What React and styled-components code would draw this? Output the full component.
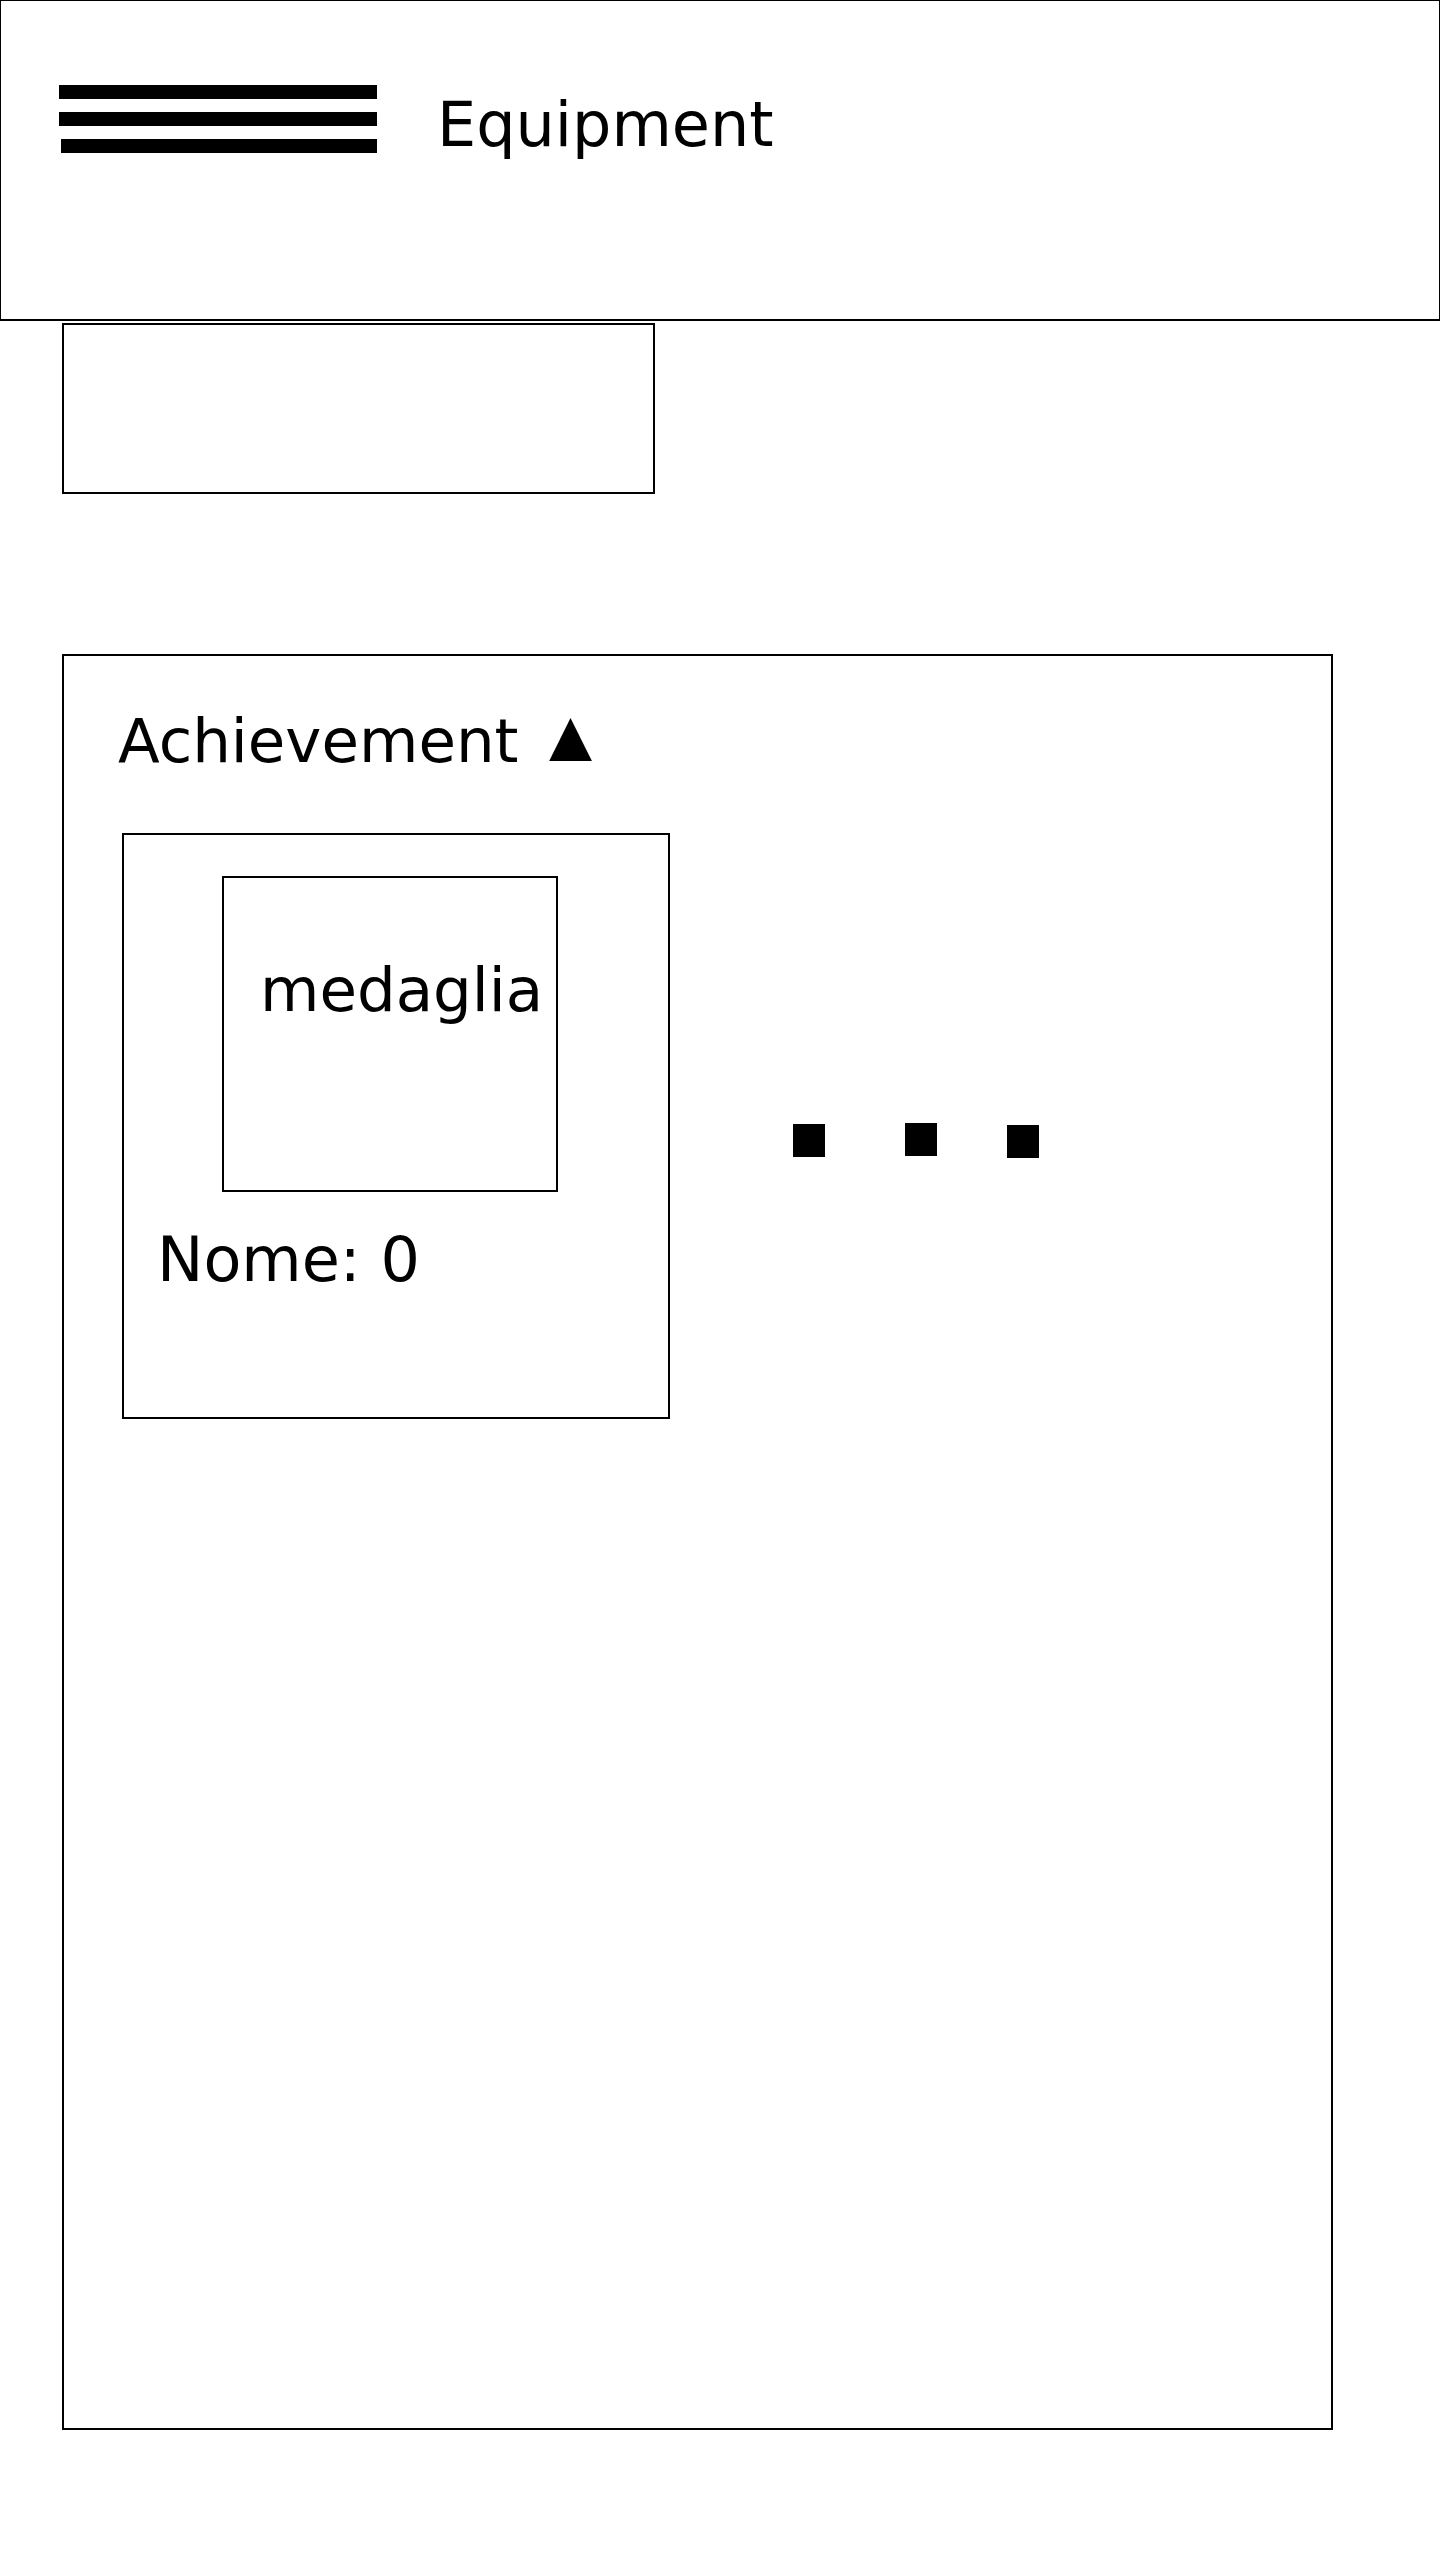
import React from "react";
import styled, { createGlobalStyle } from "styled-components";

const GlobalStyle = createGlobalStyle`
  html, body {
    margin: 0;
    padding: 0;
    background: #ffffff;
  }
  body {
    font-family: "DejaVu Sans", "Liberation Sans", sans-serif;
    color: #000000;
  }
  * { box-sizing: border-box; }
`;

const Page = styled.div`
  display: flex;
  flex-direction: column;
  align-items: flex-start;
  width: 1440px;
  min-height: 2560px;
`;

const Header = styled.header`
  display: flex;
  align-items: flex-start;
  width: 1440px;
  height: 321px;
  border: 1px solid #000;
  border-bottom-width: 2px;
  padding: 84px 0 0 58px;
`;

const Menu = styled.div`
  display: flex;
  flex-direction: column;
  gap: 13px;
  width: 318px;
`;

const Bar = styled.span`
  display: block;
  height: 14px;
  margin-left: ${(p) => p.$inset || 0}px;
  background: #000;
`;

const HeaderTitle = styled.h1`
  margin: 3px 0 0 60px;
  font-size: 62px;
  font-weight: 400;
  line-height: normal;
`;

const Placeholder = styled.div`
  width: 593px;
  height: 171px;
  margin: 2px 0 0 62px;
  border: 2px solid #000;
`;

const Panel = styled.section`
  display: flex;
  flex-direction: column;
  align-items: flex-start;
  width: 1271px;
  height: 1776px;
  margin: 160px 0 0 62px;
  border: 2px solid #000;
  padding: 49px 0 0 54px;
`;

const PanelTitle = styled.h2`
  margin: 0;
  font-size: 61px;
  font-weight: 400;
  line-height: normal;
  white-space: nowrap;
`;

const Caret = styled.span`
  display: inline-block;
  margin-left: 11px;
  font-size: 56px;
  vertical-align: 0.14em;
  line-height: 1;
`;

const CardRow = styled.div`
  display: flex;
  align-items: flex-start;
  margin: 57px 0 0 4px;
`;

const Card = styled.article`
  display: flex;
  flex-direction: column;
  align-items: flex-start;
  width: 548px;
  height: 586px;
  border: 2px solid #000;
  padding: 41px 0 0 33px;
`;

const Medal = styled.div`
  width: 336px;
  height: 316px;
  margin-left: 65px;
  border: 2px solid #000;
  padding: 76px 0 0 36px;
  font-size: 61px;
  line-height: normal;
  white-space: nowrap;
`;

const CardLabel = styled.div`
  margin-top: 31px;
  font-size: 62px;
  line-height: normal;
`;

const More = styled.div`
  display: flex;
  align-items: flex-start;
  margin: 291px 0 0 123px;
`;

const Dot = styled.span`
  display: block;
  width: 32px;
  height: 33px;
  margin-left: ${(p) => p.$gap || 0}px;
  margin-top: ${(p) => p.$dy || 0}px;
  background: #000;
`;

export default function App() {
  return (
    <>
      <GlobalStyle />
      <Page>
        <Header>
          <Menu>
            <Bar />
            <Bar />
            <Bar $inset={2} />
          </Menu>
          <HeaderTitle>Equipment</HeaderTitle>
        </Header>
        <Placeholder />
        <Panel>
          <PanelTitle>
            Achievement <Caret>▲</Caret>
          </PanelTitle>
          <CardRow>
            <Card>
              <Medal>medaglia</Medal>
              <CardLabel>Nome: 0</CardLabel>
            </Card>
            <More aria-label="...">
              <Dot />
              <Dot $gap={80} $dy={-1} />
              <Dot $gap={70} $dy={1} />
            </More>
          </CardRow>
        </Panel>
      </Page>
    </>
  );
}
